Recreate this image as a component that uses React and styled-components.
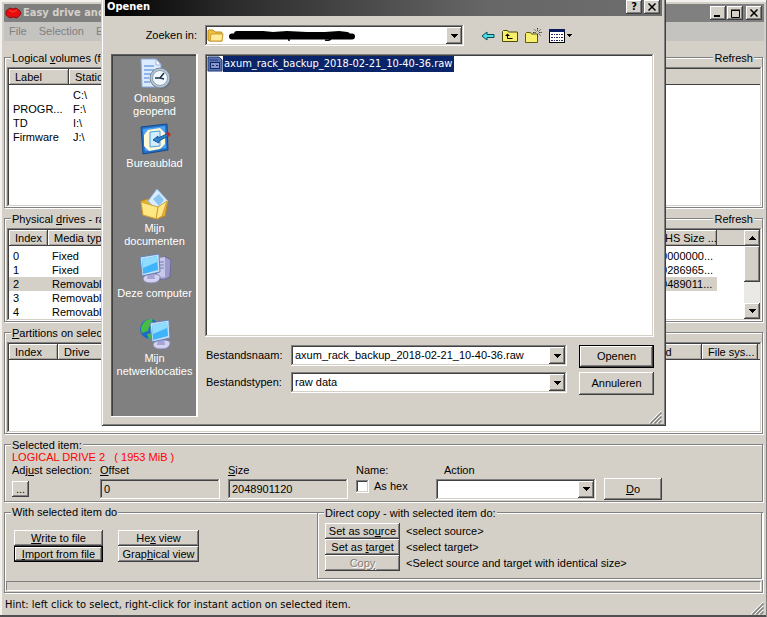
import React from "react";
import styled, { createGlobalStyle, css } from "styled-components";

const face = "#d4d0c8";
const sans = `"Liberation Sans", Arial, sans-serif`;
const tahoma = `"DejaVu Sans Condensed", "DejaVu Sans", sans-serif`;

const raised = css`
  background: ${face};
  box-shadow: inset -1px -1px #404040, inset 1px 1px #fff, inset -2px -2px #808080;
`;
const sunken = css`
  box-shadow: inset -1px -1px #fff, inset 1px 1px #808080, inset -2px -2px ${face}, inset 2px 2px #404040;
`;

const Global = createGlobalStyle`
  * { box-sizing: border-box; }
  body { margin: 0; background: ${face}; color: #000; font: 11px/13px ${sans}; }
  button, input, select { font: inherit; color: inherit; margin: 0; border: 0; border-radius: 0; outline: 0; }
  button { padding: 0; white-space: nowrap; }
  u { text-underline-offset: 1px; }
`;

const Desktop = styled.div`
  position: relative;
  overflow: hidden;
`;
const Window = styled.main`
  display: flex;
  flex-direction: column;
  min-height: 100vh;
  padding: 4px 3px 2px 4px;
  background: ${face};
  box-shadow: inset -1px 0 #808080, inset 0 -2px #505050, inset 2px 2px #f4f2ee;
`;
const TitleBar = styled.header`
  display: flex;
  align-items: center;
  gap: 1px;
  height: 18px;
  padding: 0 2px 0 1px;
  background: #808080;
  color: ${face};
  font: bold 11px/16px ${tahoma};
`;
const Title = styled.h1`
  flex: 1;
  margin: 0;
  font: inherit;
  white-space: nowrap;
`;
const CaptionButton = styled.button`
  ${raised}
  display: grid;
  place-items: center;
  width: 16px;
  height: 14px;
  color: #000;
  margin-left: ${(p) => (p.$apart ? "2px" : "0")};
`;
const MenuBar = styled.nav`
  display: flex;
  align-items: center;
  gap: 12px;
  height: 19px;
  padding-left: 5px;
  background: #c4c3c0;
`;
const MenuItem = styled.button`
  background: none;
  color: #808080;
`;
const Content = styled.div`
  flex: 1;
  display: flex;
  flex-direction: column;
  gap: 10px;
  padding: 16px 1px 0 0;
`;
const Group = styled.section`
  display: flex;
  flex-direction: column;
  min-width: 0;
  flex: ${(p) => (p.$grow ? "1" : "none")};
  border: 1px solid #808080;
  box-shadow: 1px 1px #fff, inset 1px 1px #fff;
`;
const LegendRow = styled.div`
  display: flex;
  justify-content: space-between;
  height: 14px;
  margin-top: -7px;
  padding: 0 8px 0 6px;
`;
const Legend = styled.h2`
  margin: 0;
  padding: 0 1px;
  background: ${face};
  font: inherit;
  line-height: 14px;
  white-space: nowrap;
`;
const LegendButton = styled.button`
  padding: 0 1px;
  background: ${face};
`;
const ListBox = styled.div`
  ${sunken}
  display: flex;
  align-items: stretch;
  flex: 1;
  height: ${(p) => p.$height || "auto"};
  min-height: ${(p) => p.$height || "0"};
  margin: 2px 0 0 2px;
  padding: 2px;
  background: #fff;
`;
const TableClip = styled.div`
  flex: 1;
  min-width: 0;
  overflow: hidden;
`;
const Table = styled.table`
  width: 100%;
  table-layout: fixed;
  border-collapse: separate;
  border-spacing: 0;
  tbody::before {
    content: "";
    display: table-row;
    height: 3px;
  }
`;
const HeadCell = styled.th`
  height: 16px;
  padding: 0 0 0 6px;
  overflow: hidden;
  background: ${face};
  box-shadow: ${(p) =>
    p.$plain
      ? "inset 0 -1px #404040"
      : "inset -1px -1px #404040, inset 1px 1px #fff, inset -2px -2px #a8a49c"};
  font-weight: normal;
  text-align: left;
  white-space: nowrap;
`;
const Cell = styled.td`
  height: 14px;
  padding: 0 0 0 4px;
  overflow: hidden;
  line-height: 14px;
  white-space: nowrap;
  background: ${(p) => (p.$on ? face : "transparent")};
`;
const ScrollBar = styled.div`
  display: flex;
  flex-direction: column;
  width: 16px;
  background: #ebe9e5;
`;
const ScrollButton = styled.button`
  ${raised}
  display: grid;
  place-items: center;
  height: 16px;
`;
const Thumb = styled.div`
  ${raised}
  height: 36px;
  margin-bottom: auto;
`;
const Selection = styled.p`
  margin: -1px 7px;
  color: #ff0000;
  white-space: pre;
`;
const SelectedGrid = styled.div`
  display: grid;
  grid-template-columns: 88px 128px 128px 80px 168px 58px;
  grid-template-rows: 15px 22px;
  align-items: center;
  padding: 0 7px 1px;
`;
const FieldLabel = styled.label`
  padding-left: ${(p) => (p.$indent ? "8px" : "0")};
  white-space: nowrap;
`;
const FlatInput = styled.input`
  ${sunken}
  width: 120px;
  height: 20px;
  padding: 0 4px;
  background: ${face};
`;
const CheckLabel = styled.label`
  display: flex;
  align-items: center;
  gap: 5px;
  align-self: start;
  line-height: 16px;
`;
const Check = styled.input`
  ${sunken}
  appearance: none;
  width: 13px;
  height: 13px;
  background: #fff;
`;
const Push = styled.button`
  ${raised}
  height: ${(p) => p.$h || 16}px;
  width: ${(p) => (p.$w ? p.$w + "px" : "auto")};
  ${(p) =>
    p.$default &&
    css`
      border: 1px solid #000;
    `}
  ${(p) =>
    p.disabled &&
    css`
      color: #808080;
      text-shadow: 1px 1px #fff;
    `}
`;
const ComboFrame = styled.div`
  ${sunken}
  display: flex;
  align-items: center;
  width: ${(p) => (p.$w ? p.$w + "px" : "auto")};
  height: 21px;
  padding: 2px;
  background: #fff;
`;
const ComboInput = styled.input`
  flex: 1;
  min-width: 0;
  padding: 0 2px;
  background: none;
`;
const ComboSelect = styled.select`
  appearance: none;
  flex: 1;
  min-width: 0;
  padding: 0 2px;
  background: none;
`;
const ComboArrow = styled.span`
  ${raised}
  display: grid;
  place-items: center;
  flex: none;
  width: 16px;
  height: 17px;
`;
const Lower = styled.div`
  display: grid;
  grid-template-columns: 312px 1fr;
  margin-top: -1px;
`;
const ActionGrid = styled.div`
  display: grid;
  grid-template-columns: 89px 81px;
  align-content: start;
  column-gap: 15px;
  padding: 11px 9px 0;
`;
const CopyGrid = styled.div`
  display: grid;
  grid-template-columns: 75px 1fr;
  column-gap: 6px;
  align-items: center;
  padding: 3px 7px 7px;
  white-space: nowrap;
`;
const Progress = styled.div`
  height: 10px;
  margin: 2px 1px 1px;
  border: 1px solid;
  border-color: #808080 #fff #fff #808080;
`;
const Status = styled.footer`
  display: flex;
  justify-content: space-between;
  align-items: center;
  height: 22px;
  padding-left: 1px;
  font: 11px/13px ${tahoma};
`;
const GripSvg = styled.svg`
  align-self: flex-end;
`;

const Dialog = styled.div`
  position: absolute;
  top: 0;
  left: 101px;
  right: 101px;
  padding: 0 4px 2px;
  background: ${face};
  box-shadow: inset 1px 0 ${face}, inset -1px -1px #404040, inset 2px 0 #fff, inset -2px -2px #808080;
`;
const DialogTitle = styled.header`
  display: flex;
  align-items: flex-start;
  height: 16px;
  padding: 0 2px;
  background: linear-gradient(90deg, #000, #2a2a2a 22%, #666 68%, #6e6e6e);
  color: #fff;
  font: bold 11px/14px ${tahoma};
`;
const LookIn = styled.div`
  display: grid;
  grid-template-columns: 92px 259px auto;
  align-items: center;
  padding: 9px 0 8px;
  column-gap: 8px;
`;
const LookLabel = styled.label`
  text-align: right;
`;
const Tools = styled.div`
  display: flex;
  align-items: center;
  gap: 7px;
  padding-left: 9px;
`;
const ToolButton = styled.button`
  display: block;
  background: none;
  svg { display: block; }
`;
const DialogBody = styled.div`
  display: grid;
  grid-template-columns: 87px 1fr;
  column-gap: 7px;
  padding: 0 8px 0 6px;
`;
const Places = styled.nav`
  box-shadow: inset -2px -1px #fff, inset 1px 1px #606060, inset 2px 2px #404040;
  background: #808080;
  padding: 4px 2px 34px;
`;
const Place = styled.button`
  display: flex;
  flex-direction: column;
  align-items: center;
  gap: 2px;
  width: 100%;
  height: 65px;
  background: none;
  color: #fff;
  white-space: pre-line;
  svg { display: block; flex: none; }
`;
const Pane = styled.div`
  display: flex;
  flex-direction: column;
  min-width: 0;
`;
const Files = styled.ul`
  ${sunken}
  height: 283px;
  margin: 0;
  padding: 2px;
  background: #fff;
  list-style: none;
`;
const FileRow = styled.button`
  display: flex;
  align-items: center;
  font: 11px/16px ${tahoma};
  svg { display: block; }
`;
const FileName = styled.span`
  padding: 0 2px 0 1px;
  background: #0a246a;
  color: #fff;
`;
const Form = styled.div`
  display: grid;
  grid-template-columns: 86px 1fr 75px;
  row-gap: 4px;
  padding-top: 8px;
`;
const FormLabel = styled.label`
  padding: 4px 0 0 1px;
`;
const FormCombo = styled(ComboFrame)`
  margin-right: 12px;
`;
const DialogGrip = styled.div`
  display: flex;
  justify-content: flex-end;
  margin-top: -6px;
  svg { display: block; }
`;

function Triangle({ up }) {
  return (
    <svg width="7" height="4" shapeRendering="crispEdges" aria-hidden="true">
      <path d={up ? "M0 4h7L3.500 0z" : "M0 0h7L3.500 4z"} />
    </svg>
  );
}

function Grip() {
  return (
    <GripSvg width="13" height="13" viewBox="0 0 13 13" aria-hidden="true">
      <path d="M0 12L12 0M4 12l8-8M8 12l4-4" stroke="#fff" />
      <path d="M1.500 12.500l11-11M5.500 12.500l7-7M9.500 12.500l3-3" stroke="#808080" strokeWidth="1.500" />
    </GripSvg>
  );
}

function AppLogo() {
  return (
    <svg width="17" height="14" viewBox="0 0 17 14" aria-hidden="true">
      <path d="M1 5l4-3 3 1 3-1 4 3 1 3-4 4-4-1-3 1-4-3z" fill="#e80c0c" stroke="#8d1010" />
      <path d="M4 4l4 2 4-2" stroke="#ff4a3a" fill="none" />
    </svg>
  );
}

function FolderIcon() {
  return (
    <svg width="18" height="15" viewBox="0 0 18 15" aria-hidden="true">
      <path d="M1 12V3q0-1 1-1h4l2 2h6q1 0 1 1v8H2z" fill="#f0c040" stroke="#b98a1c" />
      <path d="M3 13l1-7h12l-1 7z" fill="#ffeb9a" stroke="#c99b2e" />
    </svg>
  );
}

function Scribble() {
  return (
    <svg width="132" height="12" viewBox="0 0 132 12" role="img" aria-label="Redacted folder name">
      <path d="M7 6.500H127M12 4h26l10 1 14-1 20 1h18l14-1 8 1" fill="none" stroke="#000" strokeWidth="6" strokeLinecap="round" />
      <path d="M64 9v2M100 10q4 1 6-1" stroke="#000" strokeWidth="1.500" fill="none" />
    </svg>
  );
}

function FileIcon() {
  return (
    <svg width="16" height="16" viewBox="0 0 16 16" aria-hidden="true">
      <path d="M1 1h11l3 3v11H1z" fill="#5a6fb0" stroke="#26407c" />
      <path d="M12 0h4v4z" fill="#fff" />
      <path d="M3 4h8" stroke="#26407c" />
      <rect x="3.500" y="6.500" width="9" height="6" fill="#8796cc" stroke="#102868" />
      <path d="M5 10l1-1 1 1M9 10l1-1 1 1" stroke="#102868" fill="none" />
    </svg>
  );
}

function BackIcon() {
  return (
    <svg width="14" height="12" viewBox="0 0 14 12">
      <path d="M1 6l5-4v2.500h7v3H6V10z" fill="#4be0e0" stroke="#0b4a5a" />
    </svg>
  );
}
function UpIcon() {
  return (
    <svg width="16" height="14" viewBox="0 0 16 14">
      <path d="M.5 12.500v-10l1-1h4l1 1.500h9v9.500z" fill="#f8f06c" stroke="#4a4a10" />
      <path d="M5.500 5v4.500h5" stroke="#000" fill="none" />
      <path d="M3 7l2.500-2.500L8 7z" fill="#000" />
    </svg>
  );
}
function NewFolderIcon() {
  return (
    <svg width="17" height="16" viewBox="0 0 17 16">
      <path d="M.5 14.500v-9l1-1h4l1 1.500h6v8.500z" fill="#f8f06c" stroke="#5a5a10" />
      <path d="M12.500 0v3M12.500 6v3M8 4.500h3M14 4.500h3M9.500 1.500l2 2M15.500 1.500l-2 2M15.500 7.500l-2-2" stroke="#333" strokeDasharray="1.500 .8" />
    </svg>
  );
}
function ViewIcon() {
  return (
    <svg width="24" height="14" viewBox="0 0 24 14" shapeRendering="crispEdges">
      <path d="M.5.500h15v13H.5z" fill="#fff" stroke="#000" />
      <path d="M0 0h16v3H0z" fill="#0a1a5c" />
      <path d="M2 5.500h12M2 8.500h12M2 11.500h12" stroke="#222266" strokeDasharray="2 1 1 1" />
      <path d="M18 5h5l-2.500 3z" />
    </svg>
  );
}

function RecentIcon() {
  return (
    <svg width="32" height="32" viewBox="0 0 32 32">
      <path d="M2 1h15l5 5v23H3z" fill="#dcecff" stroke="#86a8dc" />
      <path d="M17 1v6h5z" fill="#fff" stroke="#9bb5dd" />
      <path d="M5 8h10M5 12h10M5 16h7M5 20h5M5 24h6" stroke="#8fb4ea" strokeWidth="2" />
      <circle cx="22" cy="21" r="10" fill="#606b78" />
      <circle cx="21" cy="20" r="10" fill="#b7c4d2" stroke="#7c8998" />
      <circle cx="21" cy="20" r="7.500" fill="#f0f8fd" stroke="#8ba0b4" />
      <path d="M25 15l-4 5h-5M21 20l4 1" stroke="#152f4a" strokeWidth="1.500" fill="none" />
    </svg>
  );
}
function DesktopIcon() {
  return (
    <svg width="32" height="32" viewBox="0 0 32 32">
      <path d="M2 4l26-3 1 26-25 4z" fill="#2472c8" stroke="#124a91" />
      <path d="M4 6l22-3 1 22-21 3z" fill="#4fa3ee" />
      <path d="M9 7l12-2 5 5v11l-5 5-11 2-5-5V12z" fill="#fff9d8" />
      <path d="M11 9l10-1v15l-10 1z" fill="#d1edff" stroke="#4d9bd8" />
      <path d="M14 17l5-4v2l9-4 1 2-9 5v2z" fill="#2e83cc" stroke="#15569e" />
      <path d="M27 10l3-1 2 3-3 2z" fill="#ba2d28" />
    </svg>
  );
}
function DocumentsIcon() {
  return (
    <svg width="32" height="32" viewBox="0 0 32 32">
      <path d="M2 13l7-2 4 3 16-1-3 15-8 3-14-4z" fill="#e9b332" stroke="#b9892b" />
      <path d="M9 13L18 1l11 12-9 12z" fill="#d8edff" stroke="#8fb4dc" />
      <path d="M14 11l6-5 5 6-5 6z" fill="#8cc4f2" />
      <path d="M2 14l17 5 9-6-5 15-5 3-14-4z" fill="#ffe783" stroke="#d2a138" />
      <path d="M19 19l-2 12" stroke="#c99527" />
    </svg>
  );
}
function Monitor() {
  return (
    <>
      <path d="M4 25q2-4 10-4t7 4q-1 5-9 5-8 0-8-5z" fill="#d3d2f0" stroke="#8b88b7" />
      <path d="M9 20h6l1 6H8z" fill="#a7a4d5" />
      <path d="M1 4l19-3 1 18-18 4z" fill="#c9ddf4" stroke="#5f83b8" />
      <path d="M3 6l15-3 1 14-15 4z" fill="#40b4fa" />
      <path d="M3 6l15-3v6L4 15z" fill="#8fdcff" />
    </>
  );
}
function ComputerIcon() {
  return (
    <svg width="32" height="32" viewBox="0 0 32 32">
      <path d="M18 5l9-1 5 3-1 17-7 3-7-3z" fill="#9b9aca" stroke="#6a6898" />
      <path d="M18 5l8-1v20l-8 1z" fill="#c8c8ea" />
      <path d="M19 9h6M19 12h6M19 15h6" stroke="#7c7bb0" />
      <Monitor />
    </svg>
  );
}
function NetworkIcon() {
  return (
    <svg width="32" height="32" viewBox="0 0 32 32">
      <circle cx="11" cy="11" r="10" fill="#1f69c8" />
      <path d="M3 7q4-7 10-6l1 5-4 3-1 4-6 2q-2-4 0-8zM8 16l6-1v5l-4 1z" fill="#45bd45" />
      <svg x="10" y="1" width="23" height="31" viewBox="0 0 23 31">
        <Monitor />
      </svg>
    </svg>
  );
}

const volumes = [
  ["", "C:\\"],
  ["PROGR...", "F:\\"],
  ["TD", "I:\\"],
  ["Firmware", "J:\\"],
];
const drives = [
  ["0", "Fixed", "10000000..."],
  ["1", "Fixed", "80286965..."],
  ["2", "Removable", "20489011..."],
  ["3", "Removable", ""],
  ["4", "Removable", ""],
];
const places = [
  [RecentIcon, "Onlangs\ngeopend"],
  [DesktopIcon, "Bureaublad"],
  [DocumentsIcon, "Mijn\ndocumenten"],
  [ComputerIcon, "Deze computer"],
  [NetworkIcon, "Mijn\nnetwerklocaties"],
];
const fileName = "axum_rack_backup_2018-02-21_10-40-36.raw";

function CloseGlyph() {
  return (
    <svg width="8" height="8" viewBox="0 0 8 8">
      <path d="M.5.500l7 7M7.500.500l-7 7" stroke="#000" strokeWidth="1.500" />
    </svg>
  );
}

function OpenDialog() {
  return (
    <Dialog role="dialog" aria-labelledby="dialog-title">
      <DialogTitle>
        <Title id="dialog-title">Openen</Title>
        <CaptionButton aria-label="Help">?</CaptionButton>
        <CaptionButton $apart aria-label="Close"><CloseGlyph /></CaptionButton>
      </DialogTitle>
      <LookIn>
        <LookLabel htmlFor="look">Zoeken in:</LookLabel>
        <ComboFrame>
          <FolderIcon />
          <Scribble />
          <ComboSelect id="look" />
          <ComboArrow><Triangle /></ComboArrow>
        </ComboFrame>
        <Tools>
          <ToolButton aria-label="Back"><BackIcon /></ToolButton>
          <ToolButton aria-label="Up one level"><UpIcon /></ToolButton>
          <ToolButton aria-label="New folder"><NewFolderIcon /></ToolButton>
          <ToolButton aria-label="View"><ViewIcon /></ToolButton>
        </Tools>
      </LookIn>
      <DialogBody>
        <Places>
          {places.map(([Icon, name]) => (
            <Place key={name}><Icon />{name}</Place>
          ))}
        </Places>
        <Pane>
          <Files>
            <li><FileRow><FileIcon /><FileName>{fileName}</FileName></FileRow></li>
          </Files>
          <Form>
            <FormLabel htmlFor="fname">Bestandsnaam:</FormLabel>
            <FormCombo>
              <ComboInput id="fname" defaultValue={fileName} />
              <ComboArrow><Triangle /></ComboArrow>
            </FormCombo>
            <Push $h={23} $default>Openen</Push>
            <FormLabel htmlFor="ftype">Bestandstypen:</FormLabel>
            <FormCombo>
              <ComboSelect id="ftype"><option>raw data</option></ComboSelect>
              <ComboArrow><Triangle /></ComboArrow>
            </FormCombo>
            <Push $h={23}>Annuleren</Push>
          </Form>
        </Pane>
      </DialogBody>
      <DialogGrip><Grip /></DialogGrip>
    </Dialog>
  );
}

export default function App() {
  return (
    <Desktop>
      <Global />
      <Window>
        <TitleBar>
          <AppLogo />
          <Title>Easy drive and</Title>
          <CaptionButton aria-label="Minimize">
            <svg width="8" height="8"><path d="M0 6h6v2H0z" /></svg>
          </CaptionButton>
          <CaptionButton aria-label="Maximize">
            <svg width="9" height="9"><path d="M.5 1.500h8v7h-8zM0 1h9" fill="none" stroke="#000" /></svg>
          </CaptionButton>
          <CaptionButton $apart aria-label="Close"><CloseGlyph /></CaptionButton>
        </TitleBar>
        <MenuBar>
          <MenuItem>File</MenuItem>
          <MenuItem>Selection</MenuItem>
          <MenuItem>Extra</MenuItem>
        </MenuBar>
        <Content>
          <Group $grow>
            <LegendRow>
              <Legend>Logical <u>v</u>olumes (for</Legend>
              <LegendButton>Refresh</LegendButton>
            </LegendRow>
            <ListBox>
              <TableClip>
                <Table>
                  <colgroup><col width="60" /><col width="60" /><col /></colgroup>
                  <thead><tr><HeadCell>Label</HeadCell><HeadCell>Station</HeadCell><HeadCell $plain /></tr></thead>
                  <tbody>
                    {volumes.map(([label, station]) => (
                      <tr key={station}><Cell>{label}</Cell><Cell>{station}</Cell><Cell /></tr>
                    ))}
                  </tbody>
                </Table>
              </TableClip>
            </ListBox>
          </Group>
          <Group>
            <LegendRow>
              <Legend>Physical <u>d</u>rives - raw</Legend>
              <LegendButton>Refresh</LegendButton>
            </LegendRow>
            <ListBox $height="88px">
              <TableClip>
                <Table>
                  <colgroup><col width="39" /><col width="80" /><col /><col width="66" /><col width="27" /></colgroup>
                  <thead>
                    <tr>
                      <HeadCell>Index</HeadCell><HeadCell>Media type</HeadCell><HeadCell />
                      <HeadCell>CHS Size ...</HeadCell><HeadCell $plain />
                    </tr>
                  </thead>
                  <tbody>
                    {drives.map(([index, media, size]) => {
                      const on = index === "2";
                      return (
                        <tr key={index}>
                          <Cell $on={on}>{index}</Cell><Cell $on={on}>{media}</Cell><Cell $on={on} />
                          <Cell $on={on}>{size}</Cell><Cell />
                        </tr>
                      );
                    })}
                  </tbody>
                </Table>
              </TableClip>
              <ScrollBar>
                <ScrollButton aria-label="Scroll up"><Triangle up /></ScrollButton>
                <Thumb />
                <ScrollButton aria-label="Scroll down"><Triangle /></ScrollButton>
              </ScrollBar>
            </ListBox>
          </Group>
          <Group>
            <LegendRow><Legend><u>P</u>artitions on selected</Legend></LegendRow>
            <ListBox $height="91px">
              <TableClip>
                <Table>
                  <colgroup><col width="49" /><col width="60" /><col /><col width="62" /><col width="56" /><col width="2" /></colgroup>
                  <thead>
                    <tr>
                      <HeadCell>Index</HeadCell><HeadCell>Drive</HeadCell><HeadCell />
                      <HeadCell>Used</HeadCell><HeadCell>File sys...</HeadCell><HeadCell $plain />
                    </tr>
                  </thead>
                </Table>
              </TableClip>
            </ListBox>
          </Group>
          <Group>
            <LegendRow><Legend>Selected item:</Legend></LegendRow>
            <Selection>{"LOGICAL DRIVE 2   ( 1953 MiB )"}</Selection>
            <SelectedGrid>
              <FieldLabel htmlFor="adjust">Adj<u>u</u>st selection:</FieldLabel>
              <FieldLabel htmlFor="offset"><u>O</u>ffset</FieldLabel>
              <FieldLabel htmlFor="size"><u>S</u>ize</FieldLabel>
              <FieldLabel htmlFor="hex">Name:</FieldLabel>
              <FieldLabel htmlFor="action" $indent>Action</FieldLabel>
              <span />
              <Push id="adjust" $w={17}>...</Push>
              <FlatInput id="offset" defaultValue="0" />
              <FlatInput id="size" defaultValue="2048901120" />
              <CheckLabel><Check id="hex" type="checkbox" />As hex</CheckLabel>
              <ComboFrame $w={160}>
                <ComboSelect id="action" />
                <ComboArrow><Triangle /></ComboArrow>
              </ComboFrame>
              <Push $h={22}><u>D</u>o</Push>
            </SelectedGrid>
          </Group>
          <Group>
            <Lower>
              <div>
                <LegendRow><Legend>With selected item do</Legend></LegendRow>
                <ActionGrid>
                  <Push><u>W</u>rite to file</Push>
                  <Push>He<u>x</u> view</Push>
                  <Push $default><u>I</u>mport from file</Push>
                  <Push>Grap<u>h</u>ical view</Push>
                </ActionGrid>
              </div>
              <Group>
                <LegendRow><Legend>Direct copy - with selected item do:</Legend></LegendRow>
                <CopyGrid>
                  <Push>Set as so<u>u</u>rce</Push><span>&lt;select source&gt;</span>
                  <Push>Set as <u>t</u>arget</Push><span>&lt;select target&gt;</span>
                  <Push disabled>Cop<u>y</u></Push><span>&lt;Select source and target with identical size&gt;</span>
                </CopyGrid>
              </Group>
            </Lower>
            <Progress role="progressbar" aria-label="Progress" />
          </Group>
        </Content>
        <Status>
          <span>Hint: left click to select, right-click for instant action on selected item.</span>
          <Grip />
        </Status>
      </Window>
      <OpenDialog />
    </Desktop>
  );
}
